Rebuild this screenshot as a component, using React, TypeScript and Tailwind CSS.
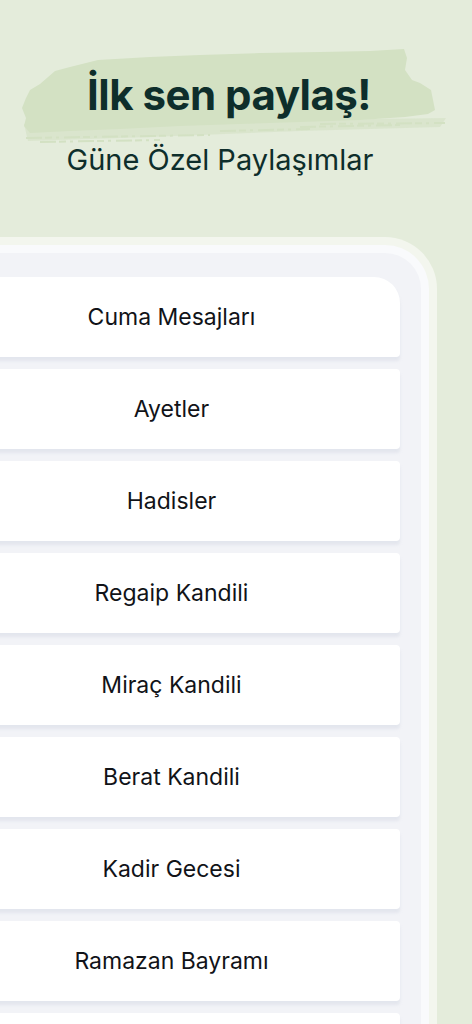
import React from 'react';

const items = [
  'Cuma Mesajları',
  'Ayetler',
  'Hadisler',
  'Regaip Kandili',
  'Miraç Kandili',
  'Berat Kandili',
  'Kadir Gecesi',
  'Ramazan Bayramı',
  '',
];

// painted brush stroke behind the headline
const Brush: React.FC = () => (
  <svg
    className="absolute left-0 top-[40px]"
    width={472}
    height={110}
    viewBox="0 40 472 110"
    preserveAspectRatio="none"
    fill="none"
  >
    <path
      d="M24 124 L300 120 L446 118 L440 127 L300 131 L150 137 L28 141 Z"
      fill="#d6e3c8"
      opacity="0.7"
    />
    <path
      d="M40 84 L55 71 L70 67 L98 60 L150 57 L200 55 L260 53 L320 52 L370 51 L404 49 L407 58 L405 70 L412 80 L420 83 L431 90 L433 100 L435 110 L428 114 L405 117 L360 120 L300 122 L240 124 L180 126 L120 129 L70 131 L30 133 L24 126 L26 118 L22 108 L26 98 L30 90 Z"
      fill="#d3e1c3"
    />
    <path
      d="M26 138 L210 135 M40 142 L160 140 M220 131 L310 129 M320 124 L445 123 M300 127 L400 125"
      stroke="#d3e1c3"
      strokeWidth="2"
      strokeDasharray="16 3 7 4 3 5"
    />
  </svg>
);

export default function App() {
  return (
    <div className="relative h-[1024px] w-full overflow-hidden bg-[#e4ecdb] font-['Inter',sans-serif]">
      <Brush />
      <div className="relative flex flex-col items-center pt-[67px] text-[#0e2e2b]">
        <h1 className="mr-[14px] text-[42px] font-bold leading-[56px] tracking-[-0.5px]">İlk sen paylaş!</h1>
        <p className="mr-[32px] mt-[21px] text-[29px] leading-[32px]">Güne Özel Paylaşımlar</p>
      </div>

      <div className="ml-[-94px] mt-[61px] w-[531px] rounded-[52px] bg-[#f3f6ee] p-[8px]">
        <div className="rounded-[44px] bg-[#f9fafc] p-[8px]">
          <div className="flex flex-col gap-[12px] rounded-[36px] bg-[#f2f3f7] px-[21px] pt-[24px] pb-[40px]">
            {items.map((label, i) => (
              <div
                key={i}
                className={`flex h-[80px] items-center justify-center bg-white shadow-[0_4px_3px_rgba(200,205,220,0.35)] ${
                  i === 0 ? 'rounded-[4px] rounded-tr-[26px]' : 'rounded-[4px]'
                }`}
              >
                {label && <span className="text-[23px] text-[#111318]">{label}</span>}
              </div>
            ))}
          </div>
        </div>
      </div>
    </div>
  );
}
